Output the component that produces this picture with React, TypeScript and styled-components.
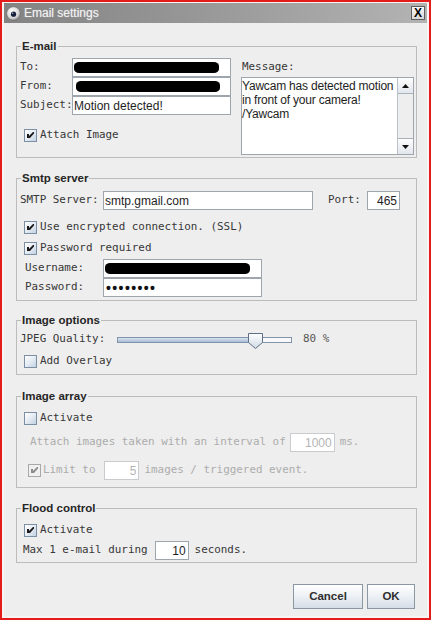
import React from "react";
import styled, { createGlobalStyle } from "styled-components";

const MONO = `"DejaVu Sans Mono", "Liberation Mono", monospace`;
const SANS = `"Liberation Sans", Arial, sans-serif`;

const GlobalStyle = createGlobalStyle`
  html, body { margin: 0; padding: 0; background: #ffffff; }
  body { font-family: ${SANS}; }
  *, *::before, *::after { box-sizing: border-box; }
`;

const Frame = styled.div`
  width: 431px;
  height: 620px;
  border: 2px solid #e31b1b;
  padding: 1px 2px 2px 2px;
  background: #f8f4f4;
  display: flex;
`;

const Window = styled.div`
  flex: 1;
  display: flex;
  flex-direction: column;
  background: #eeeeee;
`;

const TitleBar = styled.div`
  height: 20px;
  flex: none;
  display: flex;
  align-items: center;
  padding: 0 2px 0 2px;
  background: linear-gradient(to right, #838383 0%, #979797 45%, #b3b3b3 100%);
`;

const TitleText = styled.span`
  margin-left: 3px;
  font: 12px/1 ${SANS};
  color: #f1f1f1;
  text-shadow: 0 0 1px rgba(255, 255, 255, 0.5);
`;

const CloseButton = styled.div`
  margin-left: auto;
  width: 14px;
  height: 14px;
  border: 1px solid #5e5e5e;
  background: linear-gradient(#fafafa, #d6d6d6);
  display: flex;
  align-items: center;
  justify-content: center;
  font: bold 12px/1 ${SANS};
  color: #000;
`;

const Body = styled.div`
  flex: 1;
  display: flex;
  flex-direction: column;
  padding: 16px 10px 0 12px;
`;

const Section = styled.fieldset<{ $mt: number; $pt: number; $pb: number }>`
  margin: ${(p) => p.$mt}px 0 0 0;
  min-width: 0;
  border: 1px solid #bcbcbc;
  padding: ${(p) => p.$pt}px 2px ${(p) => p.$pb}px 3px;
  display: flex;
  flex-direction: column;
`;

const Legend = styled.legend`
  margin-left: 1px;
  padding: 0 1px;
  font: bold 11.5px/14px ${SANS};
  color: #262626;
`;

const Row = styled.div<{ $mt?: number }>`
  display: flex;
  align-items: center;
  height: 19px;
  flex: none;
  margin-top: ${(p) => p.$mt ?? 0}px;
`;

const CheckRow = styled.div<{ $mt?: number; $ml?: number }>`
  display: flex;
  align-items: center;
  gap: 3px;
  height: 21px;
  flex: none;
  margin-top: ${(p) => p.$mt ?? 0}px;
  margin-left: ${(p) => p.$ml ?? 0}px;
`;

const Label = styled.span<{ $w?: number; $ml?: number; $disabled?: boolean; $soft?: boolean }>`
  flex: none;
  width: ${(p) => (p.$w ? `${p.$w}px` : "auto")};
  margin-left: ${(p) => p.$ml ?? 0}px;
  font: 10.9px/1 ${MONO};
  white-space: pre;
  color: ${(p) => (p.$disabled ? "#acacac" : p.$soft ? "#555555" : "#373737")};
`;

const TextField = styled.div<{ $w: number; $ml?: number; $align?: "left" | "right"; $disabled?: boolean }>`
  flex: none;
  width: ${(p) => p.$w}px;
  height: 19px;
  margin-left: ${(p) => p.$ml ?? 0}px;
  border: 1px solid ${(p) => (p.$disabled ? "#c9cbce" : "#9fa5ac")};
  background: #ffffff;
  display: flex;
  align-items: center;
  justify-content: ${(p) => (p.$align === "right" ? "flex-end" : "flex-start")};
  padding: 0 2px 0 1px;
  font: 12px/1 ${SANS};
  color: ${(p) => (p.$disabled ? "#b4b4b4" : "#1e1e1e")};
  overflow: hidden;
  white-space: nowrap;
`;

const Redaction = styled.span<{ $w: number; $ml?: number }>`
  display: block;
  flex: none;
  width: ${(p) => p.$w}px;
  height: 11px;
  margin-left: ${(p) => p.$ml ?? 0}px;
  background: #000000;
  border-radius: 5px / 4px;
`;

const Dots = styled.span`
  font: bold 14px/1 ${SANS};
  letter-spacing: 1.4px;
  color: #111;
  margin-left: 1px;
`;

const Box = styled.span<{ $disabled?: boolean; $ml?: number }>`
  display: block;
  flex: none;
  width: 13px;
  height: 13px;
  margin-left: ${(p) => p.$ml ?? 0}px;
  border: 1px solid ${(p) => (p.$disabled ? "#a9a9a9" : "#7b8ea4")};
  background: ${(p) =>
    p.$disabled
      ? "#f0f0f0"
      : "linear-gradient(135deg, #ffffff 0%, #e8eef5 45%, #c2d1e2 100%)"};
  svg { display: block; }
`;

function CheckBox({ checked, disabled, ml }: { checked?: boolean; disabled?: boolean; ml?: number }) {
  return (
    <Box $disabled={disabled} $ml={ml}>
      {checked && (
        <svg width="11" height="11" viewBox="0 0 11 11">
          <path
            d="M2 4h2v4H2z M4 6 L8 2 L9 2 L9 3.5 L5 8 L4 8z"
            fill={disabled ? "#8c8c8c" : "#1b1b1b"}
          />
        </svg>
      )}
    </Box>
  );
}

const EmailLayout = styled.div`
  display: flex;
  gap: 10px;
`;

const Column = styled.div<{ $w: number }>`
  width: ${(p) => p.$w}px;
  flex: none;
  display: flex;
  flex-direction: column;
`;

const MessageBox = styled.div`
  width: 173px;
  height: 78px;
  border: 1px solid #9fa5ac;
  background: #ffffff;
  display: flex;
`;

const MessageText = styled.div`
  flex: 1;
  min-width: 0;
  padding: 1px 0 0 0;
  font: 12px/14px ${SANS};
  letter-spacing: -0.2px;
  color: #1e1e1e;
  white-space: pre;
`;

const ScrollBar = styled.div`
  width: 16px;
  flex: none;
  display: flex;
  flex-direction: column;
  border-left: 1px solid #b9c0c8;
  background: #ececec;
`;

const ScrollButton = styled.div<{ $down?: boolean }>`
  height: 16px;
  flex: none;
  display: flex;
  align-items: center;
  justify-content: center;
  background: linear-gradient(#fdfdfd, #e2e7ed);
  border-top: ${(p) => (p.$down ? "1px solid #a9b1ba" : "none")};
  border-bottom: ${(p) => (p.$down ? "none" : "1px solid #a9b1ba")};
`;

const ScrollTrack = styled.div`
  flex: 1;
  background: #eeeeee;
`;

const Arrow = ({ down }: { down?: boolean }) => (
  <svg width="7" height="4" viewBox="0 0 7 4">
    <path d={down ? "M0 0h7L3.5 4z" : "M0 4h7L3.5 0z"} fill="#111" />
  </svg>
);

const SliderTrack = styled.div`
  position: relative;
  flex: none;
  width: 175px;
  height: 6px;
  border: 1px solid #8294aa;
  background: #f7f9fb;
`;

const SliderFill = styled.div`
  height: 100%;
  background: linear-gradient(#d9e3ef, #a8bcd5);
`;

const SliderThumb = styled.svg`
  position: absolute;
  top: -5px;
  display: block;
`;

function Slider({ value }: { value: number }) {
  return (
    <SliderTrack>
      <SliderFill style={{ width: `${value}%` }} />
      <SliderThumb width="15" height="16" viewBox="0 0 15 16" style={{ left: `calc(${value}% - 8px)` }}>
        <defs>
          <linearGradient id="thumbG" x1="0" y1="0" x2="0" y2="1">
            <stop offset="0" stopColor="#ffffff" />
            <stop offset="1" stopColor="#cfd9e5" />
          </linearGradient>
        </defs>
        <path d="M0.5 0.5H14.5V9.5L7.5 15.5L0.5 9.5Z" fill="url(#thumbG)" stroke="#5f6f86" />
      </SliderThumb>
    </SliderTrack>
  );
}

const ButtonRow = styled.div`
  display: flex;
  justify-content: flex-end;
  gap: 4px;
  margin-top: 21px;
  padding-right: 2px;
`;

const Button = styled.button<{ $w: number }>`
  width: ${(p) => p.$w}px;
  height: 25px;
  padding: 0;
  border: 1px solid #8c97a4;
  border-radius: 0;
  background: linear-gradient(#ffffff 0%, #eef2f6 45%, #d5dde7 100%);
  font: bold 11.5px/1 ${SANS};
  color: #2e2e2e;
`;

function TitleIcon() {
  return (
    <svg width="15" height="15" viewBox="0 0 15 15">
      <defs>
        <radialGradient id="lens" cx="0.4" cy="0.35" r="0.7">
          <stop offset="0" stopColor="#ffffff" />
          <stop offset="0.7" stopColor="#d4d4d4" />
          <stop offset="1" stopColor="#8d8d8d" />
        </radialGradient>
      </defs>
      <circle cx="7.5" cy="7.5" r="6.8" fill="url(#lens)" stroke="#6c6c6c" strokeWidth="0.6" />
      <circle cx="7.5" cy="8.2" r="2.6" fill="#15203a" />
      <circle cx="6.6" cy="7.2" r="0.8" fill="#9fb0d0" />
    </svg>
  );
}

export default function App() {
  return (
    <>
      <GlobalStyle />
      <Frame>
        <Window>
          <TitleBar>
            <TitleIcon />
            <TitleText>Email settings</TitleText>
            <CloseButton>X</CloseButton>
          </TitleBar>
          <Body>
            <Section $mt={0} $pt={5} $pb={2}>
              <Legend>E-mail</Legend>
              <EmailLayout>
                <Column $w={211}>
                  <Row>
                    <Label $w={52}>To:</Label>
                    <TextField $w={159}>
                      <Redaction $w={145} />
                    </TextField>
                  </Row>
                  <Row>
                    <Label $w={52}>From:</Label>
                    <TextField $w={159}>
                      <Redaction $w={144} $ml={2} />
                    </TextField>
                  </Row>
                  <Row>
                    <Label $w={52}>Subject:</Label>
                    <TextField $w={159}>Motion detected!</TextField>
                  </Row>
                  <CheckRow $mt={10} $ml={4}>
                    <CheckBox checked />
                    <Label>Attach Image</Label>
                  </CheckRow>
                </Column>
                <Column $w={173}>
                  <Row>
                    <Label $ml={1}>Message:</Label>
                  </Row>
                  <MessageBox>
                    <MessageText>
                      {"Yawcam has detected motion\nin front of your camera!\n/Yawcam"}
                    </MessageText>
                    <ScrollBar>
                      <ScrollButton>
                        <Arrow />
                      </ScrollButton>
                      <ScrollTrack />
                      <ScrollButton $down>
                        <Arrow down />
                      </ScrollButton>
                    </ScrollBar>
                  </MessageBox>
                </Column>
              </EmailLayout>
            </Section>

            <Section $mt={13} $pt={6} $pb={3}>
              <Legend>Smtp server</Legend>
              <Row>
                <Label $w={83}>SMTP Server:</Label>
                <TextField $w={210}>smtp.gmail.com</TextField>
                <Label $ml={15} $w={39}>Port:</Label>
                <TextField $w={33} $align="right">465</TextField>
              </Row>
              <CheckRow $mt={7} $ml={4}>
                <CheckBox checked />
                <Label>Use encrypted connection. (SSL)</Label>
              </CheckRow>
              <CheckRow $ml={4}>
                <CheckBox checked />
                <Label>Password required</Label>
              </CheckRow>
              <Row>
                <Label $ml={5} $w={78}>Username:</Label>
                <TextField $w={159}>
                  <Redaction $w={145} />
                </TextField>
              </Row>
              <Row>
                <Label $ml={5} $w={78}>Password:</Label>
                <TextField $w={159}>
                  <Dots>••••••••</Dots>
                </TextField>
              </Row>
            </Section>

            <Section $mt={12} $pt={3} $pb={2}>
              <Legend>Image options</Legend>
              <Row>
                <Label $w={97}>JPEG Quality:</Label>
                <Slider value={80} />
                <Label $ml={11} $soft>80 %</Label>
              </Row>
              <CheckRow $mt={2} $ml={4}>
                <CheckBox />
                <Label>Add Overlay</Label>
              </CheckRow>
            </Section>

            <Section $mt={14} $pt={5} $pb={7}>
              <Legend>Image array</Legend>
              <CheckRow $ml={4}>
                <CheckBox />
                <Label>Activate</Label>
              </CheckRow>
              <Row $mt={4}>
                <Label $ml={10} $disabled>Attach images taken with an interval of</Label>
                <TextField $ml={4} $w={45} $align="right" $disabled>1000</TextField>
                <Label $ml={5} $disabled>ms.</Label>
              </Row>
              <Row $mt={9}>
                <CheckBox checked disabled ml={8} />
                <Label $ml={2} $disabled>Limit to</Label>
                <TextField $ml={9} $w={35} $align="right" $disabled>5</TextField>
                <Label $ml={5} $disabled>images / triggered event.</Label>
              </Row>
            </Section>

            <Section $mt={13} $pt={5} $pb={2}>
              <Legend>Flood control</Legend>
              <CheckRow $ml={4}>
                <CheckBox checked />
                <Label>Activate</Label>
              </CheckRow>
              <Row>
                <Label $ml={3}>Max 1 e-mail during</Label>
                <TextField $ml={7} $w={34} $align="right">10</TextField>
                <Label $ml={6}>seconds.</Label>
              </Row>
            </Section>

            <ButtonRow>
              <Button $w={70}>Cancel</Button>
              <Button $w={48}>OK</Button>
            </ButtonRow>
          </Body>
        </Window>
      </Frame>
    </>
  );
}
